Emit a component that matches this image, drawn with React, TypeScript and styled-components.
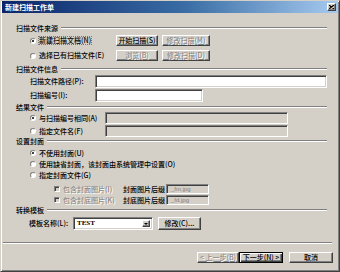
import React from "react";
import styled, { createGlobalStyle, css } from "styled-components";

const GlobalStyle = createGlobalStyle`
  html, body { margin: 0; padding: 0; background: #d4d0c8; }
  body {
    font-family: "Noto Sans CJK SC", "Liberation Sans", sans-serif;
    font-size: 7px;
    font-weight: 500;
    line-height: 1;
    color: #000;
  }
`;

const raised = css`
  border: 1px solid;
  border-color: #fff #404040 #404040 #fff;
  box-shadow: inset -1px -1px #808080;
`;

const sunken = css`
  border: 1px solid;
  border-color: #808080 #fff #fff #808080;
  box-shadow: inset 1px 1px #404040, inset -1px -1px #d4d0c8;
`;

const Window = styled.div`
  width: 340px;
  height: 272px;
  box-sizing: border-box;
  background: #d4d0c8;
  border: 1px solid;
  border-color: #d4d0c8 #404040 #404040 #d4d0c8;
  box-shadow: inset 1px 1px #fff, inset -1px -1px #808080;
  padding: 0 1px;
  display: flex;
  flex-direction: column;
`;

const TitleBar = styled.div`
  height: 12px;
  display: flex;
  align-items: center;
  justify-content: space-between;
  padding: 0 2px 0 3px;
  background: linear-gradient(to right, #0a246a, #3a6ea5 55%, #a6caf0);
  color: #fff;
  font-weight: bold;
  font-size: 7px;
`;

const CloseBox = styled.span`
  width: 9px;
  height: 8px;
  box-sizing: border-box;
  background: #d4d0c8;
  ${raised};
  display: flex;
  align-items: center;
  justify-content: center;
`;

const Body = styled.div`
  display: flex;
  flex-direction: column;
  padding: 11px 11px 0 14px;
`;

const GroupHeader = styled.div<{ mt: number }>`
  display: flex;
  align-items: center;
  height: 8px;
  gap: 3px;
  margin-top: ${(p) => p.mt}px;
  &::after {
    content: "";
    flex: 1;
    border-top: 1px solid #808080;
    border-bottom: 1px solid #fff;
  }
`;

const Row = styled.div<{ h: number; mt: number; indent: number }>`
  display: flex;
  align-items: center;
  height: ${(p) => p.h}px;
  margin-top: ${(p) => p.mt}px;
  padding-left: ${(p) => p.indent}px;
`;

const Choice = styled.label<{ w?: number }>`
  display: flex;
  align-items: center;
  gap: 3px;
  width: ${(p) => (p.w ? `${p.w}px` : "auto")};
  flex-shrink: 0;
  white-space: nowrap;
`;

const RadioDot = styled.span<{ on?: boolean }>`
  width: 6px;
  height: 6px;
  box-sizing: border-box;
  border-radius: 50%;
  background: #fff;
  border: 1px solid;
  border-color: #808080 #fff #fff #808080;
  display: flex;
  align-items: center;
  justify-content: center;
  &::after {
    content: "";
    width: 2px;
    height: 2px;
    border-radius: 50%;
    background: ${(p) => (p.on ? "#000" : "transparent")};
  }
`;

const CheckBox = styled.span`
  width: 6px;
  height: 6px;
  box-sizing: border-box;
  background: #d4d0c8;
  ${sunken};
`;

const Caption = styled.span<{ off?: boolean; focus?: boolean }>`
  white-space: nowrap;
  color: ${(p) => (p.off ? "#8a8a8a" : "#000")};
  text-shadow: ${(p) => (p.off ? "1px 1px #fff" : "none")};
  outline: ${(p) => (p.focus ? "1px dotted #777" : "none")};
  outline-offset: 0;
`;

const FieldLabel = styled.span<{ w: number }>`
  width: ${(p) => p.w}px;
  flex-shrink: 0;
  white-space: nowrap;
`;

const Field = styled.div<{ w: number; off?: boolean }>`
  width: ${(p) => p.w}px;
  height: 100%;
  box-sizing: border-box;
  background: ${(p) => (p.off ? "#d4d0c8" : "#fff")};
  ${sunken};
  display: flex;
  align-items: center;
  padding-left: 4px;
  color: #808080;
  font-size: 6px;
  font-weight: normal;
  font-family: "Liberation Sans", sans-serif;
`;

const Button = styled.button<{ w: number; off?: boolean; main?: boolean }>`
  width: ${(p) => p.w}px;
  height: 100%;
  box-sizing: border-box;
  margin: 0;
  padding: 0;
  background: #d4d0c8;
  font: inherit;
  white-space: nowrap;
  color: ${(p) => (p.off ? "#8a8a8a" : "#000")};
  text-shadow: ${(p) => (p.off ? "1px 1px #fff" : "none")};
  ${(p) =>
    p.main
      ? css`
          border: 1px solid #000;
          box-shadow: inset 1px 1px #fff, inset -1px -1px #404040, inset -2px -2px #808080;
        `
      : raised};
`;

const ButtonGroup = styled.div<{ gap: number }>`
  display: flex;
  height: 100%;
  gap: ${(p) => p.gap}px;
`;

const Select = styled.div`
  width: 80px;
  height: 100%;
  box-sizing: border-box;
  background: #fff;
  ${sunken};
  display: flex;
  align-items: stretch;
  padding: 2px;
  margin-right: 5px;
`;

const SelectText = styled.span`
  flex: 1;
  display: flex;
  align-items: center;
  padding-left: 1px;
  font-family: "Liberation Serif", serif;
  font-weight: bold;
  font-size: 7px;
`;

const DropArrow = styled.span`
  width: 8px;
  box-sizing: border-box;
  background: #d4d0c8;
  ${raised};
  display: flex;
  align-items: center;
  justify-content: center;
  &::after {
    content: "";
    border-left: 2px solid transparent;
    border-right: 2px solid transparent;
    border-top: 2px solid #000;
  }
`;

const Separator = styled.div`
  margin: 12px 6px 0 1px;
  border-top: 1px solid #808080;
  border-bottom: 1px solid #fff;
`;

const Footer = styled.div`
  display: flex;
  justify-content: flex-end;
  height: 11px;
  margin-top: 8px;
  padding-right: 5px;
  gap: 6px;
`;

const Radio = ({ on, text, w, focus }: { on?: boolean; text: string; w?: number; focus?: boolean }) => (
  <Choice w={w}>
    <RadioDot on={on} />
    <Caption focus={focus}>{text}</Caption>
  </Choice>
);

export default function App() {
  return (
    <>
      <GlobalStyle />
      <Window>
        <TitleBar>
          <span>新建扫描工作单</span>
          <CloseBox>
            <svg width="5" height="4" viewBox="0 0 5 4">
              <path d="M0 0 L5 4 M5 0 L0 4" stroke="#000" strokeWidth="1.2" />
            </svg>
          </CloseBox>
        </TitleBar>
        <Body>
          <GroupHeader mt={0}>扫描文件来源</GroupHeader>
          <Row h={11} mt={3} indent={14}>
            <Radio on focus w={86} text="新建扫描文档(N)" />
            <ButtonGroup gap={4}>
              <Button w={42}>开始扫描(S)</Button>
              <Button w={48} off>修改扫描(M)</Button>
            </ButtonGroup>
          </Row>
          <Row h={11} mt={4} indent={14}>
            <Radio w={86} text="选择已有扫描文件(E)" />
            <ButtonGroup gap={4}>
              <Button w={42} off>浏览(B)</Button>
              <Button w={48} off>修改扫描(D)</Button>
            </ButtonGroup>
          </Row>

          <GroupHeader mt={4}>扫描文件信息</GroupHeader>
          <Row h={13} mt={2} indent={14}>
            <FieldLabel w={65}>扫描文件路径(P):</FieldLabel>
            <Field w={233} />
          </Row>
          <Row h={13} mt={1} indent={14}>
            <FieldLabel w={65}>扫描编号(I):</FieldLabel>
            <Field w={108} />
          </Row>

          <GroupHeader mt={1}>结果文件</GroupHeader>
          <Row h={12} mt={1} indent={14}>
            <Radio on w={75} text="与扫描编号相同(A)" />
            <Field w={183} off />
          </Row>
          <Row h={12} mt={1} indent={14}>
            <Radio w={75} text="指定文件名(F)" />
            <Field w={183} off />
          </Row>

          <GroupHeader mt={0}>设置封面</GroupHeader>
          <Row h={10} mt={3} indent={14}>
            <Radio on text="不使用封面(U)" />
          </Row>
          <Row h={10} mt={1} indent={14}>
            <Radio text="使用缺省封面，该封面由系统管理中设置(O)" />
          </Row>
          <Row h={10} mt={1} indent={14}>
            <Radio text="指定封面文件(G)" />
          </Row>
          <Row h={10} mt={4} indent={38}>
            <Choice w={69}>
              <CheckBox />
              <Caption off>包含封面图片(I)</Caption>
            </Choice>
            <FieldLabel w={43}>封面图片后缀</FieldLabel>
            <Field w={43} off>_fm.jpg</Field>
          </Row>
          <Row h={10} mt={1} indent={38}>
            <Choice w={69}>
              <CheckBox />
              <Caption off>包含封底图片(K)</Caption>
            </Choice>
            <FieldLabel w={43}>封底图片后缀</FieldLabel>
            <Field w={43} off>_fd.jpg</Field>
          </Row>

          <GroupHeader mt={1}>转换模板</GroupHeader>
          <Row h={13} mt={3} indent={13}>
            <FieldLabel w={44}>模板名称(L):</FieldLabel>
            <Select>
              <SelectText>TEST</SelectText>
              <DropArrow />
            </Select>
            <Button w={43}>修改(C)...</Button>
          </Row>
        </Body>
        <Separator />
        <Footer>
          <ButtonGroup gap={0}>
            <Button w={42} off>&lt; 上一步(B)</Button>
            <Button w={44} main>下一步(N) &gt;</Button>
          </ButtonGroup>
          <Button w={44}>取消</Button>
        </Footer>
      </Window>
    </>
  );
}
